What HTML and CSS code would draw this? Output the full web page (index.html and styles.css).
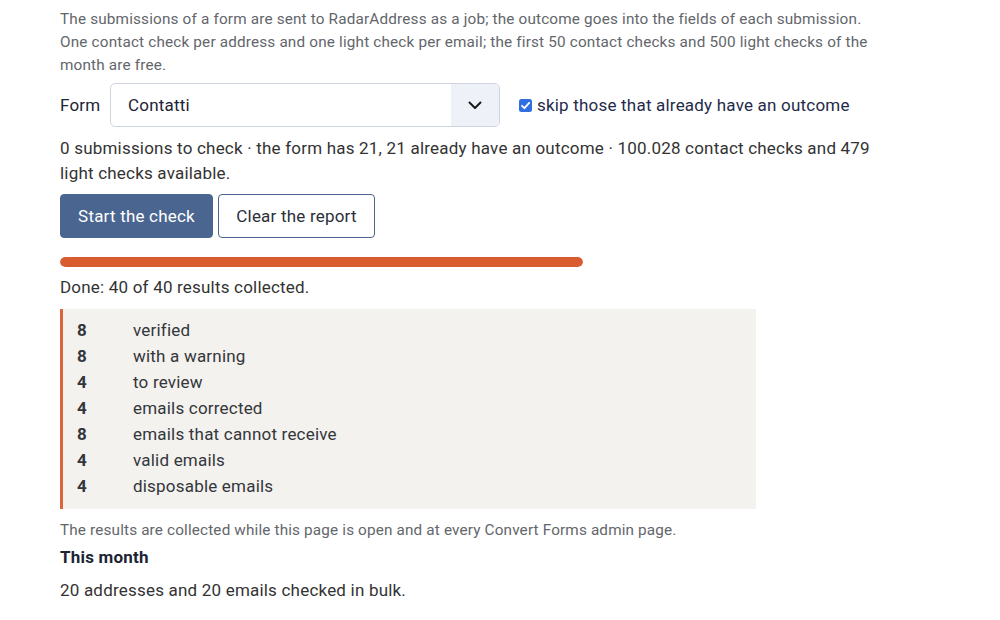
FILE: index.html
```html
<!DOCTYPE html>
<html lang="en">
<head>
<meta charset="utf-8">
<title>RadarAddress bulk check</title>
<link rel="stylesheet" href="styles.css">
</head>
<body>
<div class="page">
  <p class="intro">The submissions of a form are sent to RadarAddress as a job; the outcome goes into the fields of each submission. One contact check per address and one light check per email; the first 50 contact checks and 500 light checks of the month are free.</p>

  <div class="form-row">
    <label class="form-label" for="form-select">Form</label>
    <div class="select">
      <span class="select-value">Contatti</span>
      <span class="select-arrow">
        <svg width="14" height="9" viewBox="0 0 14 9"><path d="M1.5 1.5 L7 7 L12.5 1.5" fill="none" stroke="#1a1a1a" stroke-width="2" stroke-linecap="round" stroke-linejoin="round"/></svg>
      </span>
    </div>
    <label class="skip">
      <span class="checkbox">
        <svg width="13" height="13" viewBox="0 0 13 13"><rect x="0" y="0" width="13" height="13" rx="2.5" fill="#2f6fe0"/><path d="M3 6.8 L5.4 9.2 L10.2 3.8" fill="none" stroke="#fff" stroke-width="1.8" stroke-linecap="round" stroke-linejoin="round"/></svg>
      </span>
      skip those that already have an outcome
    </label>
  </div>

  <p class="status">0 submissions to check · the form has 21, 21 already have an outcome · 100.028 contact checks and 479 light checks available.</p>

  <div class="actions">
    <button class="btn btn-primary">Start the check</button>
    <button class="btn btn-outline">Clear the report</button>
  </div>

  <div class="progress"><div class="progress-fill" style="width:100%"></div></div>

  <p class="done">Done: 40 of 40 results collected.</p>

  <div class="report">
    <div class="report-row"><span class="num">8</span><span class="lbl">verified</span></div>
    <div class="report-row"><span class="num">8</span><span class="lbl">with a warning</span></div>
    <div class="report-row"><span class="num">4</span><span class="lbl">to review</span></div>
    <div class="report-row"><span class="num">4</span><span class="lbl">emails corrected</span></div>
    <div class="report-row"><span class="num">8</span><span class="lbl">emails that cannot receive</span></div>
    <div class="report-row"><span class="num">4</span><span class="lbl">valid emails</span></div>
    <div class="report-row"><span class="num">4</span><span class="lbl">disposable emails</span></div>
  </div>

  <p class="note">The results are collected while this page is open and at every Convert Forms admin page.</p>
  <h3 class="month-title">This month</h3>
  <p class="month-text">20 addresses and 20 emails checked in bulk.</p>
</div>
</body>
</html>
```

FILE: styles.css
```css
html, body {
  margin: 0;
  padding: 0;
  background: #ffffff;
}

body {
  font-family: Roboto, "Liberation Sans", Arial, sans-serif;
  color: #333333;
  font-size: 17px;
  letter-spacing: 0.2px;
}

.page {
  padding: 7.5px 0 0 60px;
  width: 815px;
}

p, h3 {
  margin: 0;
}

.intro {
  font-size: 15.3px;
  letter-spacing: 0.17px;
  line-height: 23px;
  color: #63666b;
}

.form-row {
  display: flex;
  align-items: center;
  margin-top: 6.5px;
  height: 44px;
}

.form-label {
  color: #1d2433;
  width: 50px;
}

.select {
  display: flex;
  width: 390px;
  height: 44px;
  box-sizing: border-box;
  border: 1px solid #cfd5de;
  border-radius: 5px;
  overflow: hidden;
  background: #ffffff;
}

.select-value {
  flex: 1;
  display: flex;
  align-items: center;
  padding-left: 17px;
  color: #1d2433;
}

.select-arrow {
  width: 48px;
  display: flex;
  align-items: center;
  justify-content: center;
  background: #eef1f8;
}

.skip {
  display: flex;
  align-items: center;
  margin-left: 19px;
  color: #1f2b4a;
}

.checkbox {
  display: flex;
  margin-right: 5px;
}

.status {
  margin-top: 8.5px;
  line-height: 25px;
  color: #333333;
}

.actions {
  display: flex;
  gap: 5px;
  margin-top: 8.5px;
}

.btn {
  font-family: Roboto, "Liberation Sans", Arial, sans-serif;
  font-size: 17px;
  letter-spacing: 0.2px;
  height: 44px;
  border-radius: 4px;
  padding: 0;
  box-sizing: border-box;
  cursor: pointer;
}

.btn-primary {
  background: #4a6590;
  color: #ffffff;
  border: 1px solid #4a6590;
  width: 153px;
}

.btn-outline {
  background: #ffffff;
  color: #2b2f38;
  border: 1px solid #4a6590;
  width: 157px;
}

.progress {
  margin-top: 19px;
  width: 523px;
  height: 10px;
  border-radius: 5px;
  background: #f0ece6;
  overflow: hidden;
}

.progress-fill {
  height: 100%;
  background: #d95b30;
  border-radius: 5px;
}

.done {
  margin-top: 8px;
  line-height: 24px;
  color: #333333;
}

.report {
  margin-top: 10px;
  width: 696px;
  box-sizing: border-box;
  background: #f4f2ee;
  border-left: 3px solid #d9663d;
  padding: 8px 0 10px 14px;
}

.report-row {
  display: flex;
  line-height: 26px;
  color: #33363b;
}

.num {
  width: 56px;
  font-weight: 700;
}

.note {
  margin-top: 11px;
  font-size: 15.3px;
  letter-spacing: 0.15px;
  line-height: 20px;
  color: #63666b;
}

.month-title {
  margin-top: 5px;
  font-size: 17px;
  line-height: 24px;
  font-weight: 700;
  color: #1d2433;
}

.month-text {
  margin-top: 9px;
  line-height: 24px;
  color: #333333;
}
```
